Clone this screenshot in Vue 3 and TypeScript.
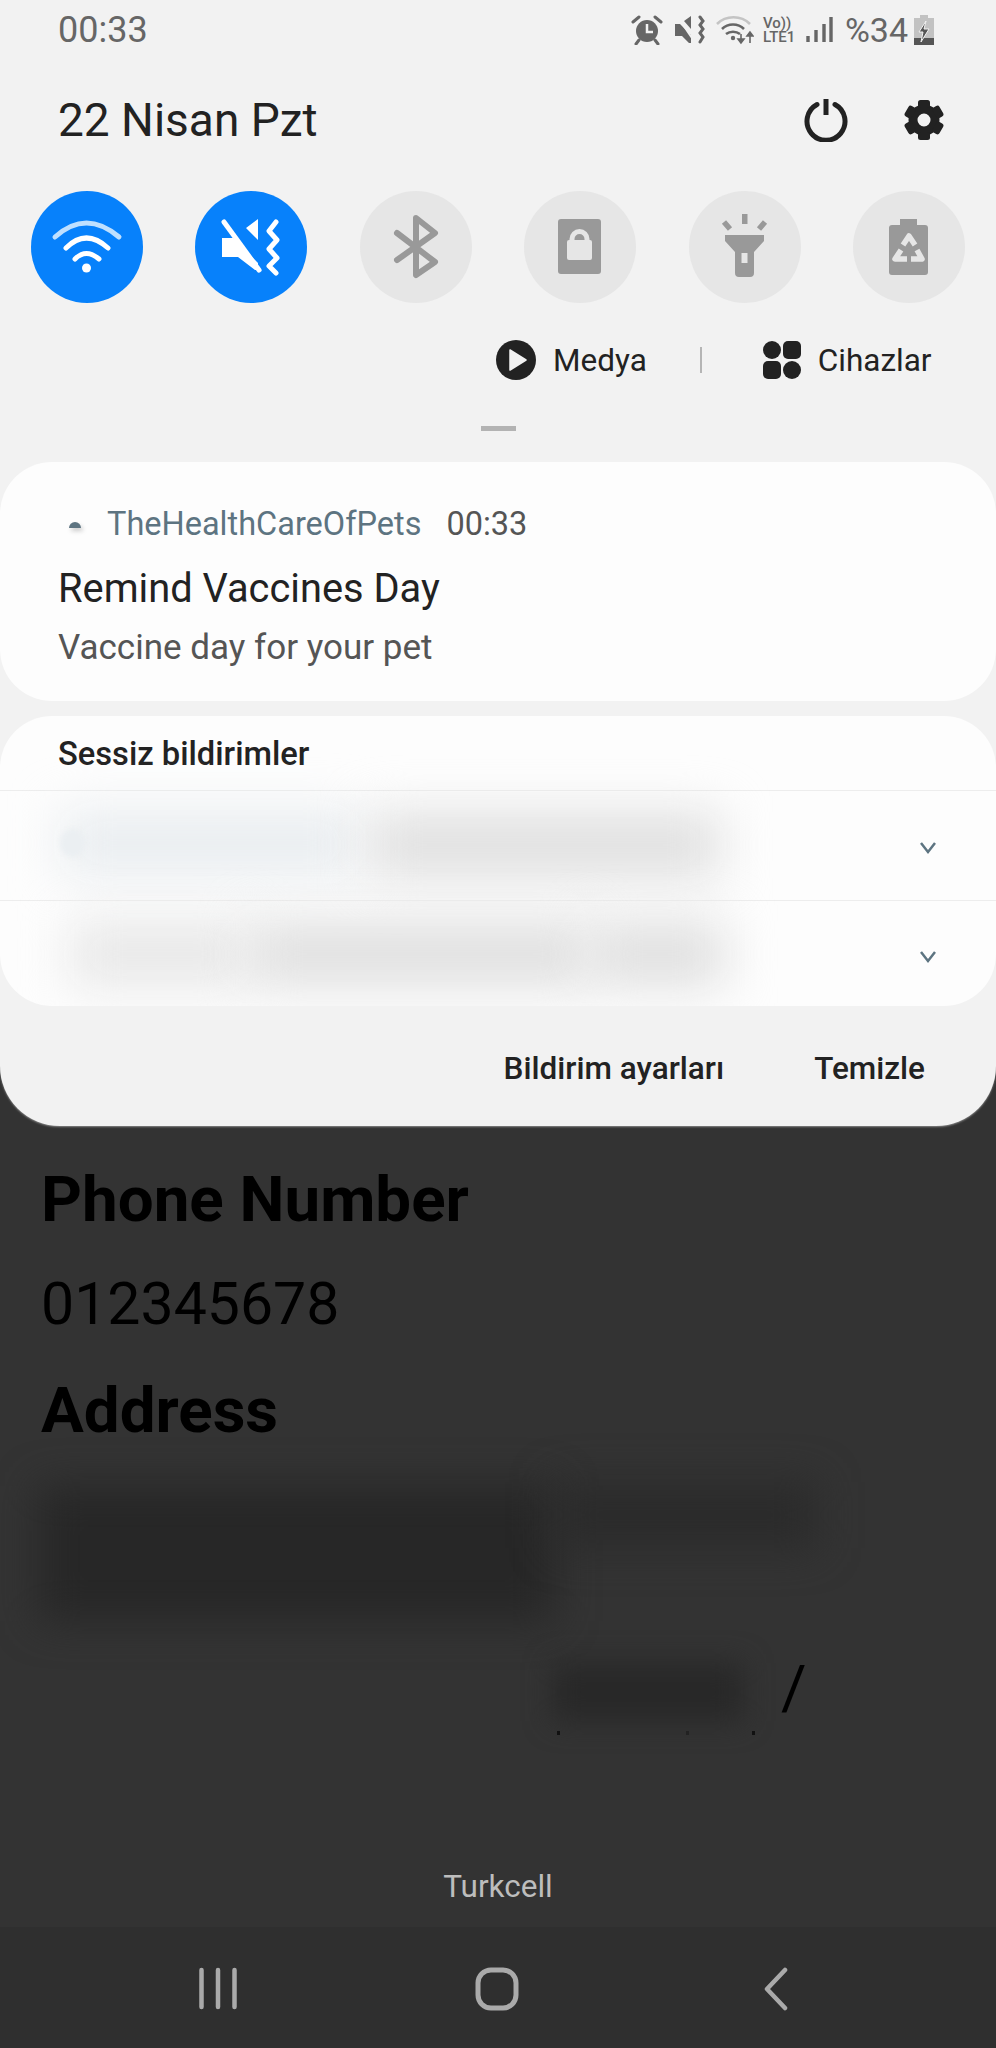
<script setup lang="ts">
const gearTeeth = [0, 60, 120, 180, 240, 300];
</script>

<template>
  <div class="screen">
    <section class="panel">
      <header class="status">
        <span class="clock">00:33</span>
        <div class="status-icons">
          <svg class="st" width="32" height="30" viewBox="0 0 32 30">
            <circle cx="16" cy="16" r="11" fill="#666" />
            <path d="M16 9v8h6" fill="none" stroke="#f2f2f2" stroke-width="2.5" />
            <path d="M2 7l6-5M30 7l-6-5M8 25l-3 4M24 25l3 4" fill="none" stroke="#666" stroke-width="3" stroke-linecap="round" />
          </svg>
          <svg class="st gap-a" width="30" height="30" viewBox="0 0 30 30">
            <path d="M0 9h5l11 11v8h-2L7 21H0zM9 6l7-5v13z" fill="#666" />
            <path d="M2 1l17 25" stroke="#f2f2f2" stroke-width="2" />
            <path d="M25 2l3 4-3 4 3 4-3 4 3 4-3 5" fill="none" stroke="#666" stroke-width="3" stroke-linecap="round" />
          </svg>
          <svg class="st gap-b" width="38" height="30" viewBox="0 0 38 30">
            <path d="M1 9C10 0 25 0 34 9" fill="none" stroke="#c4c4c4" stroke-width="2.6" />
            <path d="M6 14c6-6 16-6 22 0M10 19c4-3 10-3 14 0" fill="none" stroke="#666" stroke-width="2.6" />
            <circle cx="17" cy="23" r="2.2" fill="#666" />
            <path d="M25 19v9M25 28l-3-4h6zM34 28v-9M34 17l-3 4h6z" fill="#666" stroke="#666" stroke-width="1.6" />
          </svg>
          <div class="volte gap-c"><span>Vo))</span><span>LTE1</span></div>
          <svg class="st gap-d" width="27" height="28" viewBox="0 0 27 28">
            <path d="M2 20v6M10 14v12M18 8v18M25 1v25" stroke="#666" stroke-width="3.4" fill="none" />
          </svg>
          <span class="percent">%34</span>
          <svg class="st gap-e" width="20" height="30" viewBox="0 0 20 30">
            <path d="M6 0h8v3h6v27H0V3h6z" fill="#c2c2c2" />
            <path d="M0 23h20v7H0z" fill="#555" />
            <path d="M12 6l-7 11h4l-2 10 8-13h-5z" fill="#555" stroke="#f2f2f2" stroke-width="1" />
          </svg>
        </div>
      </header>

      <div class="date-row">
        <span class="date">22 Nisan Pzt</span>
        <div class="date-actions">
          <svg width="44" height="44" viewBox="0 0 44 44">
            <path d="M13 6.5a19 19 0 1 0 18 0" fill="none" stroke="#222" stroke-width="5" stroke-linecap="round" />
            <path d="M22 1v16" stroke="#222" stroke-width="5" />
          </svg>
          <svg width="44" height="44" viewBox="-22 -22 44 44">
            <circle r="11" fill="none" stroke="#222" stroke-width="9" />
            <rect v-for="a in gearTeeth" :key="a" x="-6" y="-20" width="12" height="8" rx="2.5" fill="#222" :transform="`rotate(${a})`" />
          </svg>
        </div>
      </div>

      <div class="toggles">
        <div class="toggle on">
          <svg viewBox="0 0 112 112">
            <path d="M24 46Q55 18 88 46" fill="none" stroke="#bfe0ff" stroke-width="5" stroke-linecap="round" />
            <path d="M35 57Q55 37 77 57M44 68Q55 57 68 68" fill="none" stroke="#fff" stroke-width="5" stroke-linecap="round" />
            <circle cx="55.5" cy="77" r="4.5" fill="#fff" />
          </svg>
        </div>
        <div class="toggle on">
          <svg viewBox="0 0 112 112">
            <path d="M27 47h11l25 25v7h-3L43 66H27zM51 37l12-9v21z" fill="#fff" />
            <path d="M29 31l35 48" stroke="#fff" stroke-width="5" stroke-linecap="round" />
            <path d="M81 31l-7 9 8 9-8 9 8 9-8 8 7 7" fill="none" stroke="#fff" stroke-width="5" stroke-linecap="round" stroke-linejoin="round" />
          </svg>
        </div>
        <div class="toggle">
          <svg viewBox="0 0 112 112">
            <path d="M37 42l38 29-19 13V27l19 15-38 27" fill="none" stroke="#999" stroke-width="6" stroke-linecap="round" stroke-linejoin="round" />
          </svg>
        </div>
        <div class="toggle">
          <svg viewBox="0 0 112 112">
            <rect x="34" y="28" width="43" height="55" rx="3" fill="#999" />
            <rect x="43" y="49" width="25" height="20" rx="2" fill="#e6e6e6" />
            <path d="M48 50v-2a7.500 7.500 0 0 1 15 0v2" fill="none" stroke="#e6e6e6" stroke-width="5" />
          </svg>
        </div>
        <div class="toggle">
          <svg viewBox="0 0 112 112">
            <path d="M36 44h39v6L65 61v21a4 4 0 0 1-4 4H50a4 4 0 0 1-4-4V61L36 50z" fill="#999" />
            <rect x="52.500" y="62" width="6" height="10" fill="#e6e6e6" />
            <rect x="53" y="23" width="5.500" height="10" fill="#999" />
            <path d="M35 31l6 7M76 31l-6 7" stroke="#999" stroke-width="5.500" />
          </svg>
        </div>
        <div class="toggle">
          <svg viewBox="0 0 112 112">
            <path d="M47 34v-6h17v6h8a3 3 0 0 1 3 3v44a3 3 0 0 1-3 3H39a3 3 0 0 1-3-3V37a3 3 0 0 1 3-3z" fill="#999" />
            <path d="M50 54l6-9 6 9M48 59l-6 9h12M64 59l5 9H58" fill="none" stroke="#e6e6e6" stroke-width="5.500" stroke-linejoin="round" />
          </svg>
        </div>
      </div>

      <div class="media-row">
        <svg width="40" height="40" viewBox="0 0 40 40">
          <circle cx="20" cy="20" r="20" fill="#222" />
          <path d="M14 10l16 10-16 10z" fill="#f2f2f2" stroke="#f2f2f2" stroke-width="1.500" stroke-linejoin="round" />
        </svg>
        <span class="media-label">Medya</span>
        <i class="media-sep"></i>
        <svg width="38" height="38" viewBox="0 0 38 38">
          <circle cx="9" cy="9" r="9" fill="#222" />
          <rect x="20" y="0" width="18" height="18" rx="5" fill="#222" />
          <rect x="0" y="20" width="18" height="18" rx="5" fill="#222" />
          <circle cx="29" cy="29" r="9" fill="#222" />
        </svg>
        <span class="media-label devices">Cihazlar</span>
      </div>

      <i class="handle"></i>

      <article class="card alert">
        <div class="alert-head">
          <span class="app-icon">
            <svg width="14" height="10" viewBox="0 0 14 10">
              <path d="M1 9a6 6 0 0 1 12 0z" fill="#5d7481" />
            </svg>
          </span>
          <span class="app-name">TheHealthCareOfPets</span>
          <span class="app-time">00:33</span>
        </div>
        <div class="alert-title">Remind Vaccines Day</div>
        <div class="alert-text">Vaccine day for your pet</div>
      </article>

      <section class="card silent">
        <div class="silent-head">Sessiz bildirimler</div>
        <div class="silent-row first">
          <i class="smudge s1"></i>
          <i class="smudge s2"></i>
          <i class="ring"></i>
          <svg class="chev" width="18" height="14" viewBox="0 0 18 14"><path d="M2 2l7 9 7-9" fill="none" stroke="#5d7481" stroke-width="2.500" /></svg>
        </div>
        <div class="silent-row second">
          <i class="smudge s3"></i>
          <i class="smudge s4"></i>
          <i class="smudge s5"></i>
          <svg class="chev" width="18" height="14" viewBox="0 0 18 14"><path d="M2 2l7 9 7-9" fill="none" stroke="#5d7481" stroke-width="2.500" /></svg>
        </div>
      </section>

      <footer class="panel-actions">
        <span>Bildirim ayarları</span>
        <span>Temizle</span>
      </footer>
    </section>

    <main class="behind">
      <h2 class="label">Phone Number</h2>
      <p class="value">012345678</p>
      <h2 class="label address">Address</h2>
      <div class="redact-top">
        <i class="blob b1"></i>
        <i class="blob b2"></i>
      </div>
      <div class="redact-line">
        <i class="blob b3"></i>
        <span class="slash">/</span>
        <i class="dot d1"></i>
        <i class="dot d2"></i>
        <i class="dot d3"></i>
      </div>
      <div class="carrier">Turkcell</div>
    </main>

    <nav class="navbar">
      <svg width="60" height="44" viewBox="0 0 60 44">
        <path d="M13.500 3v37M30 3v37M46.500 3v37" stroke="#aaa" stroke-width="4.500" stroke-linecap="round" />
      </svg>
      <svg width="60" height="44" viewBox="0 0 60 44">
        <rect x="11" y="3" width="38" height="38" rx="13" fill="none" stroke="#aaa" stroke-width="5" />
      </svg>
      <svg width="60" height="44" viewBox="0 0 60 44">
        <path d="M39 3L21 22l18 19" fill="none" stroke="#aaa" stroke-width="4.500" stroke-linecap="round" stroke-linejoin="round" />
      </svg>
    </nav>
  </div>
</template>

<style scoped>
.screen {
  width: 996px;
  height: 2048px;
  display: flex;
  flex-direction: column;
  background: #333;
  font-family: Roboto, "Liberation Sans", sans-serif;
  overflow: hidden;
}

.panel {
  height: 1126px;
  flex: none;
  box-sizing: border-box;
  display: flex;
  flex-direction: column;
  background: #f2f2f2;
  border-radius: 0 0 60px 60px;
  box-shadow: 0 1px 2px #888;
}

.status {
  height: 60px;
  display: flex;
  align-items: center;
  justify-content: space-between;
  padding: 0 62px 0 58px;
}

.clock {
  font-size: 36px;
  color: #666;
}

.status-icons {
  display: flex;
  align-items: center;
  color: #666;
}

.st { flex: none; }
.gap-a { margin-left: 12px; }
.gap-b { margin-left: 11px; }
.gap-c { margin-left: 9px; }
.gap-d { margin-left: 7px; }
.gap-e { margin-left: 6px; }

.volte {
  display: flex;
  flex-direction: column;
  width: 36px;
  font-size: 15px;
  line-height: 14px;
  font-weight: 500;
}

.percent {
  font-size: 34px;
  margin-left: 12px;
}

.date-row {
  height: 120px;
  box-sizing: border-box;
  padding: 0 50px 0 58px;
  display: flex;
  align-items: center;
  justify-content: space-between;
}

.date {
  font-size: 46px;
  color: #222;
}

.date-actions {
  display: flex;
  gap: 54px;
}

.toggles {
  margin-top: 11px;
  padding: 0 31px;
  display: flex;
  justify-content: space-between;
}

.toggle {
  width: 112px;
  height: 112px;
  border-radius: 50%;
  background: #e6e6e6;
}

.toggle.on {
  background: #0781fb;
}

.toggle svg {
  display: block;
  width: 112px;
  height: 112px;
}

.media-row {
  margin-top: 37px;
  height: 40px;
  display: flex;
  align-items: center;
  padding-left: 496px;
}

.media-label {
  margin-left: 17px;
  font-size: 31.5px;
  color: #222;
}

.media-sep {
  width: 2px;
  height: 26px;
  margin: 0 61px 0 53px;
  background: #b5b5b5;
}

.devices {
  margin-left: 17px;
}

.handle {
  width: 35px;
  height: 5px;
  margin: 46px auto 0;
  background: #b3b3b3;
}

.card {
  background: #fdfdfd;
  border-radius: 52px;
}

.alert {
  margin-top: 31px;
  height: 239px;
  box-sizing: border-box;
  padding: 42px 0 0 58px;
}

.alert-head {
  display: flex;
  align-items: center;
  height: 40px;
}

.app-icon {
  width: 49px;
  display: flex;
  padding-left: 10px;
  box-sizing: border-box;
}

.app-icon svg {
  filter: drop-shadow(2px 3px 2px #ccc);
}

.app-name {
  font-size: 32.5px;
  color: #5d7481;
}

.app-time {
  margin-left: 25px;
  font-size: 32.5px;
  color: #555;
}

.alert-title {
  margin-top: 23px;
  height: 44px;
  line-height: 44px;
  font-size: 39.8px;
  color: #222;
}

.alert-text {
  margin-top: 15px;
  height: 44px;
  line-height: 44px;
  font-size: 35px;
  color: #555;
}

.silent {
  margin-top: 15px;
  height: 290px;
  overflow: hidden;
}

.silent-head {
  height: 74px;
  box-sizing: border-box;
  padding: 20px 0 0 58px;
  line-height: 36px;
  font-size: 32.7px;
  font-weight: 500;
  color: #222;
}

.silent-row {
  display: flex;
  align-items: center;
  position: relative;
  border-top: 1px solid #ededed;
  padding-left: 60px;
}

.silent-row.first {
  height: 109px;
}

.silent-row.second {
  height: 105px;
  padding-left: 70px;
}

.smudge {
  display: block;
  height: 66px;
  filter: blur(24px);
  flex: none;
}

.s1 { width: 300px; background: #e9edf0; margin-top: -6px; }
.s2 { width: 350px; margin-left: 10px; background: #e0e0e0; margin-top: -2px; }
.s3 { width: 180px; background: #e8e8e8; }
.s4 { width: 340px; background: #e0e0e0; }
.s5 { width: 135px; background: #e0e0e0; }

.ring {
  position: absolute;
  left: 60px;
  top: 38px;
  width: 26px;
  height: 28px;
  border-radius: 50%;
  background: #ebeff2;
  filter: blur(2px);
}

.chev {
  margin-left: auto;
  margin-right: 59px;
  flex: none;
}

.first .chev { margin-top: 4px; }
.second .chev { margin-top: 6px; }

.panel-actions {
  flex: 1;
  display: flex;
  align-items: center;
  justify-content: flex-end;
  gap: 90px;
  padding: 4px 71px 0 0;
  font-size: 31.5px;
  font-weight: 500;
  color: #222;
}

.behind {
  flex: 1;
  display: flex;
  flex-direction: column;
  padding-left: 41px;
  color: #000;
}

.label {
  margin: 0;
  font-size: 63.7px;
  font-weight: 700;
  line-height: 70px;
}

.label:first-child {
  margin-top: 39px;
}

.value {
  margin: 34px 0 0;
  font-size: 59px;
  line-height: 70px;
}

.address {
  margin-top: 37px;
}

.redact-top {
  margin: 14px 0 0 -2px;
  display: flex;
  align-items: flex-start;
  height: 157px;
}

.blob {
  display: block;
  flex: none;
  background: #272727;
  filter: blur(20px);
}

.b1 { width: 515px; height: 135px; margin-top: 26px; }
.b2 { width: 262px; height: 66px; margin-top: 22px; background: #2b2b2b; }

.redact-line {
  position: relative;
  display: flex;
  align-items: flex-start;
  height: 110px;
  padding-left: 512px;
  margin-top: 10px;
}

.b3 { width: 190px; height: 58px; margin-top: 36px; background: #282828; filter: blur(14px); }

.slash {
  margin-left: 38px;
  margin-top: 31px;
  font-size: 62px;
  line-height: 60px;
}

.dot {
  position: absolute;
  top: 104px;
  width: 3px;
  height: 4px;
  background: #111;
}

.d1 { left: 516px; }
.d2 { left: 645px; background: #222; }
.d3 { left: 711px; }

.carrier {
  margin: 130px 0 0 -41px;
  text-align: center;
  line-height: 40px;
  font-size: 31.5px;
  color: #bdbdbd;
}

.navbar {
  height: 121px;
  flex: none;
  display: flex;
  align-items: center;
  justify-content: center;
  gap: 219px;
  padding: 2px 2px 0 0;
  box-sizing: border-box;
  background: #2f2f2f;
}
</style>
